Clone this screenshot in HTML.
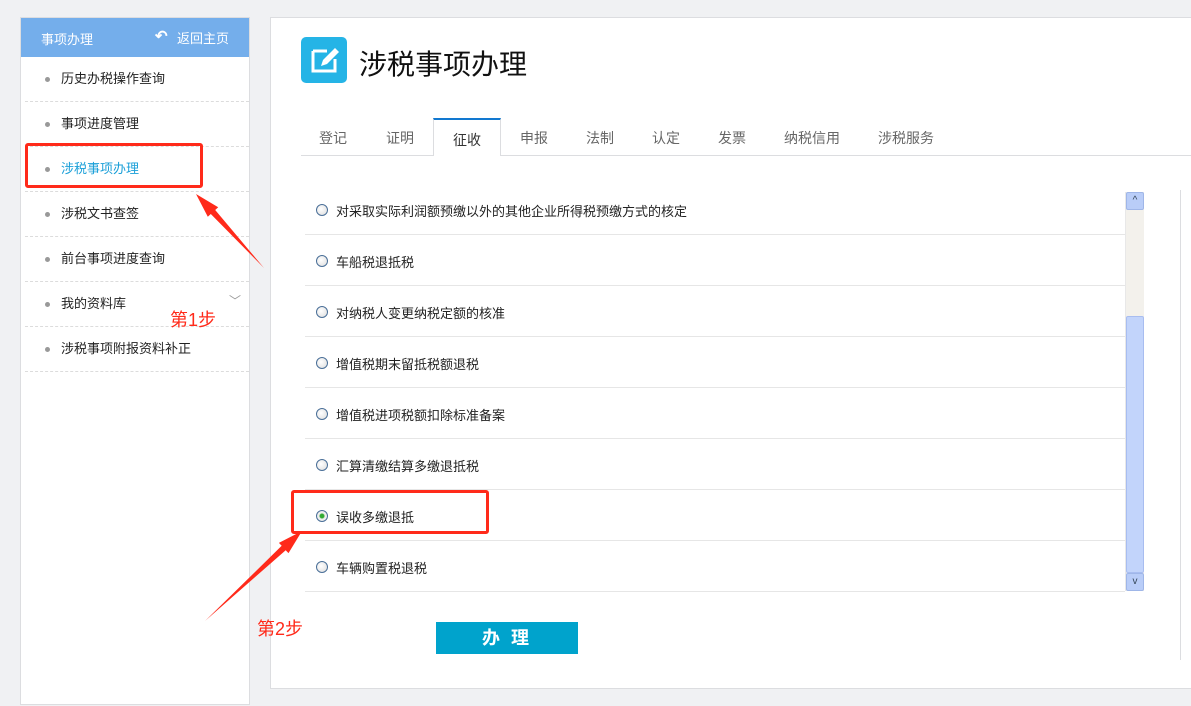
<!DOCTYPE html>
<html><head><meta charset="utf-8"><style>
*{margin:0;padding:0;box-sizing:border-box}
body{width:1191px;height:706px;background:#f0f1f3;font-family:"Liberation Sans","Noto Sans CJK SC",sans-serif;position:relative;overflow:hidden}
.abs{position:absolute}
.side{left:20px;top:17px;width:230px;height:688px;background:#fff;border:1px solid #dcdde0}
.sh{left:0;top:0;width:228px;height:39px;background:#74aeeb;color:#fff;font-size:13px}
.item{position:absolute;left:4px;width:224px;height:45px;border-bottom:1px dashed #dcdcdc;font-size:13px;color:#222;line-height:44px;padding-left:36px}
.item:before{content:"";position:absolute;left:20px;top:20px;width:5px;height:5px;border-radius:50%;background:#999}
.main{left:270px;top:17px;width:925px;height:672px;background:#fff;border:1px solid #dcdde0}
.tab{position:absolute;top:128px;font-size:14px;color:#666}
.row{position:absolute;left:305px;width:820px;height:51px;border-bottom:1px solid #e6e6e6;font-size:13px;color:#222}
.row span{position:absolute;left:31px;top:17px}
.rad{position:absolute;left:11px;top:20px;width:12px;height:12px;border-radius:50%;border:1px solid #4a6f98;background:radial-gradient(circle at 40% 40%,#fff,#dcdcdc)}
.red{position:absolute;color:#ff2a1a;font-size:18px}
</style></head><body>
<div class="abs side">
 <div class="abs sh"><span class="abs" style="left:20px;top:11px">事项办理</span><span class="abs" style="left:134px;top:9px;font-size:15px;font-weight:bold">↶</span><span class="abs" style="left:156px;top:10px;font-size:13px">返回主页</span></div>
 <div class="item" style="top:39px">历史办税操作查询</div>
 <div class="item" style="top:84px">事项进度管理</div>
 <div class="item" style="top:129px;color:#1a9fd8">涉税事项办理</div>
 <div class="item" style="top:174px">涉税文书查签</div>
 <div class="item" style="top:219px">前台事项进度查询</div>
 <div class="item" style="top:264px">我的资料库<span class="abs" style="left:204px;top:-3px;color:#999;font-size:12px">﹀</span></div>
 <div class="item" style="top:309px">涉税事项附报资料补正</div>
</div>
<div class="abs main"></div>
<div class="abs" style="left:301px;top:37px;width:46px;height:46px;background:#25b4e6;border-radius:5px">
<svg width="46" height="46"><path d="M12 14h14M12 14v20h22v-12" stroke="#fff" stroke-width="3" fill="none"/><path d="M20 29l2-6 12-12 4 4-12 12z" fill="#fff"/></svg></div>
<div class="abs" style="left:359px;top:43px;font-size:28px;color:#111">涉税事项办理</div>
<div class="abs" style="left:301px;top:155px;width:890px;height:1px;background:#dcdde0"></div>
<div class="abs" style="left:433px;top:118px;width:68px;height:38px;background:#fff;border:1px solid #dcdde0;border-top:2px solid #1278d0;border-bottom:none"></div>
<div class="tab" style="left:319px">登记</div><div class="tab" style="left:386px">证明</div><div class="tab" style="left:453px;top:130px;color:#333">征收</div><div class="tab" style="left:520px">申报</div><div class="tab" style="left:586px">法制</div><div class="tab" style="left:652px">认定</div><div class="tab" style="left:718px">发票</div><div class="tab" style="left:784px">纳税信用</div><div class="tab" style="left:878px">涉税服务</div>
<div class="row" style="top:184px"><div class="rad"></div><span>对采取实际利润额预缴以外的其他企业所得税预缴方式的核定</span></div>
<div class="row" style="top:235px"><div class="rad"></div><span>车船税退抵税</span></div>
<div class="row" style="top:286px"><div class="rad"></div><span>对纳税人变更纳税定额的核准</span></div>
<div class="row" style="top:337px"><div class="rad"></div><span>增值税期末留抵税额退税</span></div>
<div class="row" style="top:388px"><div class="rad"></div><span>增值税进项税额扣除标准备案</span></div>
<div class="row" style="top:439px"><div class="rad"></div><span>汇算清缴结算多缴退抵税</span></div>
<div class="row" style="top:490px"><div class="rad" style="background:radial-gradient(circle,#3a3 0 2px,#eee 3px)"></div><span>误收多缴退抵</span></div>
<div class="row" style="top:541px"><div class="rad"></div><span>车辆购置税退税</span></div>
<div class="abs" style="left:1125px;top:192px;width:19px;height:399px;background:#f3f1ec;border-left:1px solid #e8e8e8"></div>
<div class="abs" style="left:1126px;top:192px;width:18px;height:18px;background:#b9cdf8;border:1px solid #9fb6e8;border-radius:2px;font-size:10px;color:#345;text-align:center;line-height:16px">^</div>
<div class="abs" style="left:1126px;top:316px;width:18px;height:257px;background:#c2d4fb;border:1px solid #a8bdf0;border-radius:2px"></div>
<div class="abs" style="left:1126px;top:573px;width:18px;height:18px;background:#b9cdf8;border:1px solid #9fb6e8;border-radius:2px;font-size:10px;color:#345;text-align:center;line-height:16px">v</div>
<div class="abs" style="left:1180px;top:190px;width:1px;height:470px;background:#dcdde0"></div>
<div class="abs" style="left:436px;top:622px;width:142px;height:32px;background:#00a3cc;color:#fff;font-size:18px;font-weight:bold;text-align:center;line-height:32px;letter-spacing:3px">办 理</div>
<div class="abs" style="left:25px;top:143px;width:178px;height:45px;border:3px solid #ff2a1a;border-radius:3px"></div>
<div class="abs" style="left:291px;top:490px;width:198px;height:44px;border:3px solid #ff2a1a;border-radius:3px"></div>
<svg class="abs" style="left:0;top:0" width="1191" height="706"><polygon fill="#ff2a1a" points="196,194 218.2,207.3 215.2,210 264,268 210.8,214 207.8,216.7"/><polygon fill="#ff2a1a" points="302,531 288.5,553.1 285.7,550.2 205,621 281.7,545.8 278.9,542.9"/></svg>
<div class="red" style="left:170px;top:306px">第1步</div>
<div class="red" style="left:257px;top:615px">第2步</div>
</body></html>
